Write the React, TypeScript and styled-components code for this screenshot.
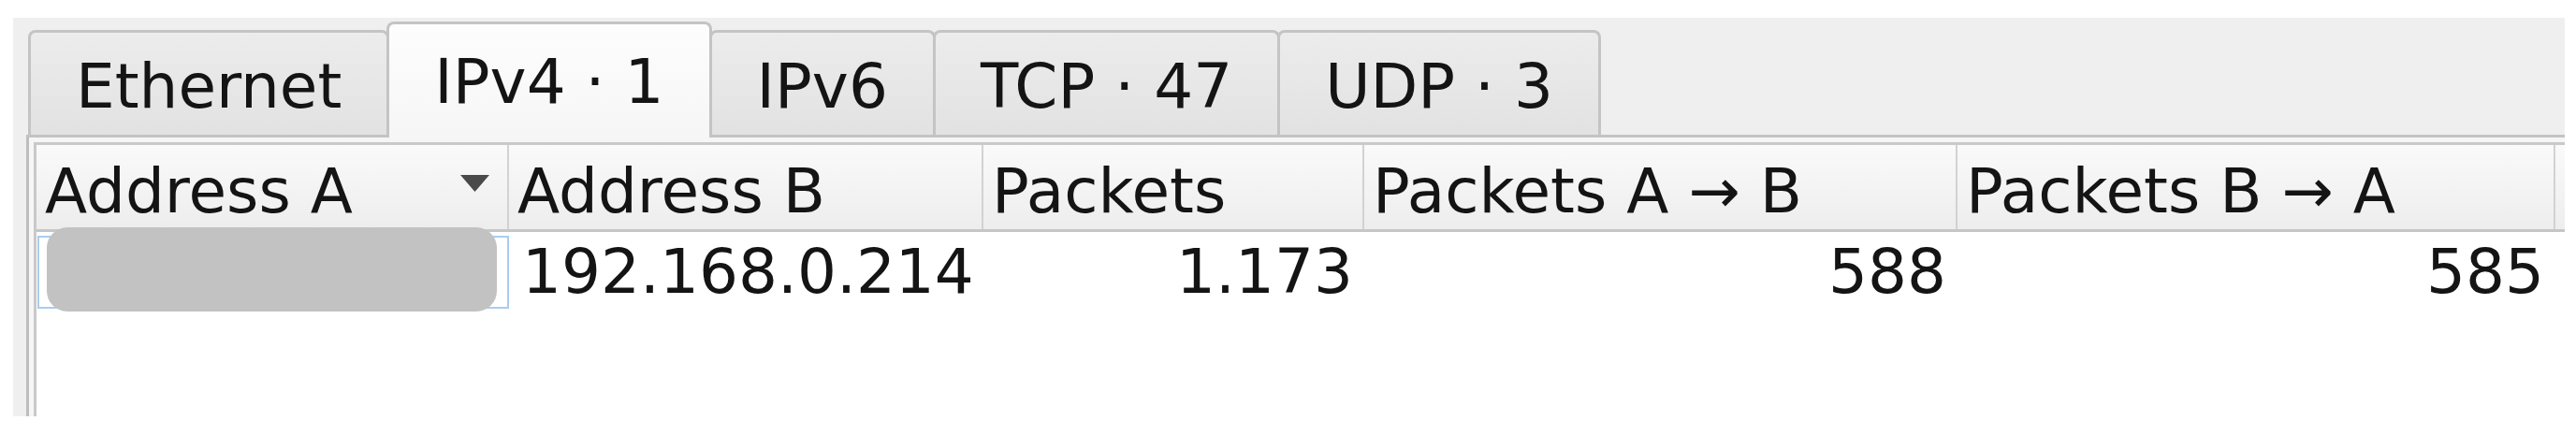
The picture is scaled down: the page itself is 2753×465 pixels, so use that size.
import styled, { createGlobalStyle } from "styled-components";

const GlobalStyle = createGlobalStyle`
  html, body {
    margin: 0;
    padding: 0;
    background: #ffffff;
  }
  body {
    font-family: "DejaVu Sans", "Liberation Sans", sans-serif;
    color: #141414;
  }
`;

const Window = styled.div`
  margin: 19px 12px 20px 14px;
  height: 426px;
  padding-left: 14px;
  background: #efefef;
  display: flex;
  flex-direction: column;
  overflow: hidden;
`;

const TabBar = styled.div`
  flex: none;
  height: 125px;
  padding-left: 2px;
  display: flex;
  align-items: flex-end;
`;

const Tab = styled.div<{ $active?: boolean }>`
  position: relative;
  z-index: ${(p) => (p.$active ? 2 : 1)};
  box-sizing: border-box;
  height: ${(p) => (p.$active ? 124 : 112)}px;
  margin-right: -3px;
  margin-bottom: ${(p) => (p.$active ? -3 : 0)}px;
  padding: ${(p) => (p.$active ? 23 : 19)}px 48px 0;
  border: 3px solid #c4c4c4;
  border-bottom: none;
  border-radius: 8px 8px 0 0;
  background: ${(p) =>
    p.$active
      ? "linear-gradient(#fdfdfd, #f6f6f6)"
      : "linear-gradient(#ececec, #e2e2e2)"};
  font-size: 66px;
  line-height: 77px;
  white-space: nowrap;
`;

const Pane = styled.div`
  flex: 1;
  display: flex;
  padding: 5px 0 0 5px;
  border-top: 3px solid #c3c3c3;
  border-left: 3px solid #bdbdbd;
  background: #f6f6f6;
`;

const Table = styled.div`
  flex: 1;
  border-top: 3px solid #c9c9c9;
  border-left: 3px solid #c9c9c9;
  background: #ffffff;
  font-size: 66px;
  line-height: 77px;
`;

const HeaderRow = styled.div`
  display: flex;
  box-sizing: border-box;
  height: 93px;
  border-bottom: 3px solid #c6c6c6;
  background: linear-gradient(#fafafa, #ededed);
`;

const HeaderCell = styled.div<{ $w?: number }>`
  box-sizing: border-box;
  ${(p) => (p.$w ? `width: ${p.$w}px; flex: none;` : "flex: 1;")}
  display: flex;
  justify-content: space-between;
  padding: 11px 0 0 9px;
  border-right: ${(p) => (p.$w ? "2px solid #d2d2d2" : "none")};
  white-space: nowrap;
`;

const SortArrow = styled.svg`
  flex: none;
  margin: 21px 19px 0 0;
`;

const Row = styled.div`
  display: flex;
  height: 84px;
`;

const Cell = styled.div<{ $w: number; $right?: boolean }>`
  box-sizing: border-box;
  width: ${(p) => p.$w}px;
  flex: none;
  padding: 4px ${(p) => (p.$right ? 12 : 0)}px 0 ${(p) => (p.$right ? 0 : 14)}px;
  text-align: ${(p) => (p.$right ? "right" : "left")};
  white-space: nowrap;
`;

const FocusCell = styled.div<{ $w: number }>`
  position: relative;
  box-sizing: border-box;
  width: ${(p) => p.$w - 1}px;
  flex: none;
  height: 78px;
  margin: 4px 0 0 1px;
  border: 2px solid #a9cdf1;
`;

const Redaction = styled.div`
  position: absolute;
  left: 8px;
  right: 11px;
  top: -11px;
  bottom: -5px;
  border-radius: 22px;
  background: #c2c2c2;
`;

const tabs = [
  { label: "Ethernet" },
  { label: "IPv4 · 1", active: true },
  { label: "IPv6" },
  { label: "TCP · 47" },
  { label: "UDP · 3" },
];

const columns = [
  { title: "Address A", width: 505, sorted: true },
  { title: "Address B", width: 507 },
  { title: "Packets", width: 407 },
  { title: "Packets A → B", width: 634 },
  { title: "Packets B → A", width: 639 },
];

const App = () => {
  return (
    <>
      <GlobalStyle />
      <Window>
        <TabBar>
          {tabs.map((tab) => (
            <Tab key={tab.label} $active={tab.active}>
              {tab.label}
            </Tab>
          ))}
        </TabBar>
        <Pane>
          <Table>
            <HeaderRow>
              {columns.map((col) => (
                <HeaderCell key={col.title} $w={col.width}>
                  <span>{col.title}</span>
                  {col.sorted && (
                    <SortArrow width="31" height="18" viewBox="0 0 31 18">
                      <polygon points="0,0 31,0 15.5,18" fill="#4a4a4a" />
                    </SortArrow>
                  )}
                </HeaderCell>
              ))}
              <HeaderCell />
            </HeaderRow>
            <Row>
              <FocusCell $w={columns[0].width}>
                <Redaction />
              </FocusCell>
              <Cell $w={columns[1].width}>192.168.0.214</Cell>
              <Cell $w={columns[2].width} $right>
                1.173
              </Cell>
              <Cell $w={columns[3].width} $right>
                588
              </Cell>
              <Cell $w={columns[4].width} $right>
                585
              </Cell>
            </Row>
          </Table>
        </Pane>
      </Window>
    </>
  );
};

export default App;
